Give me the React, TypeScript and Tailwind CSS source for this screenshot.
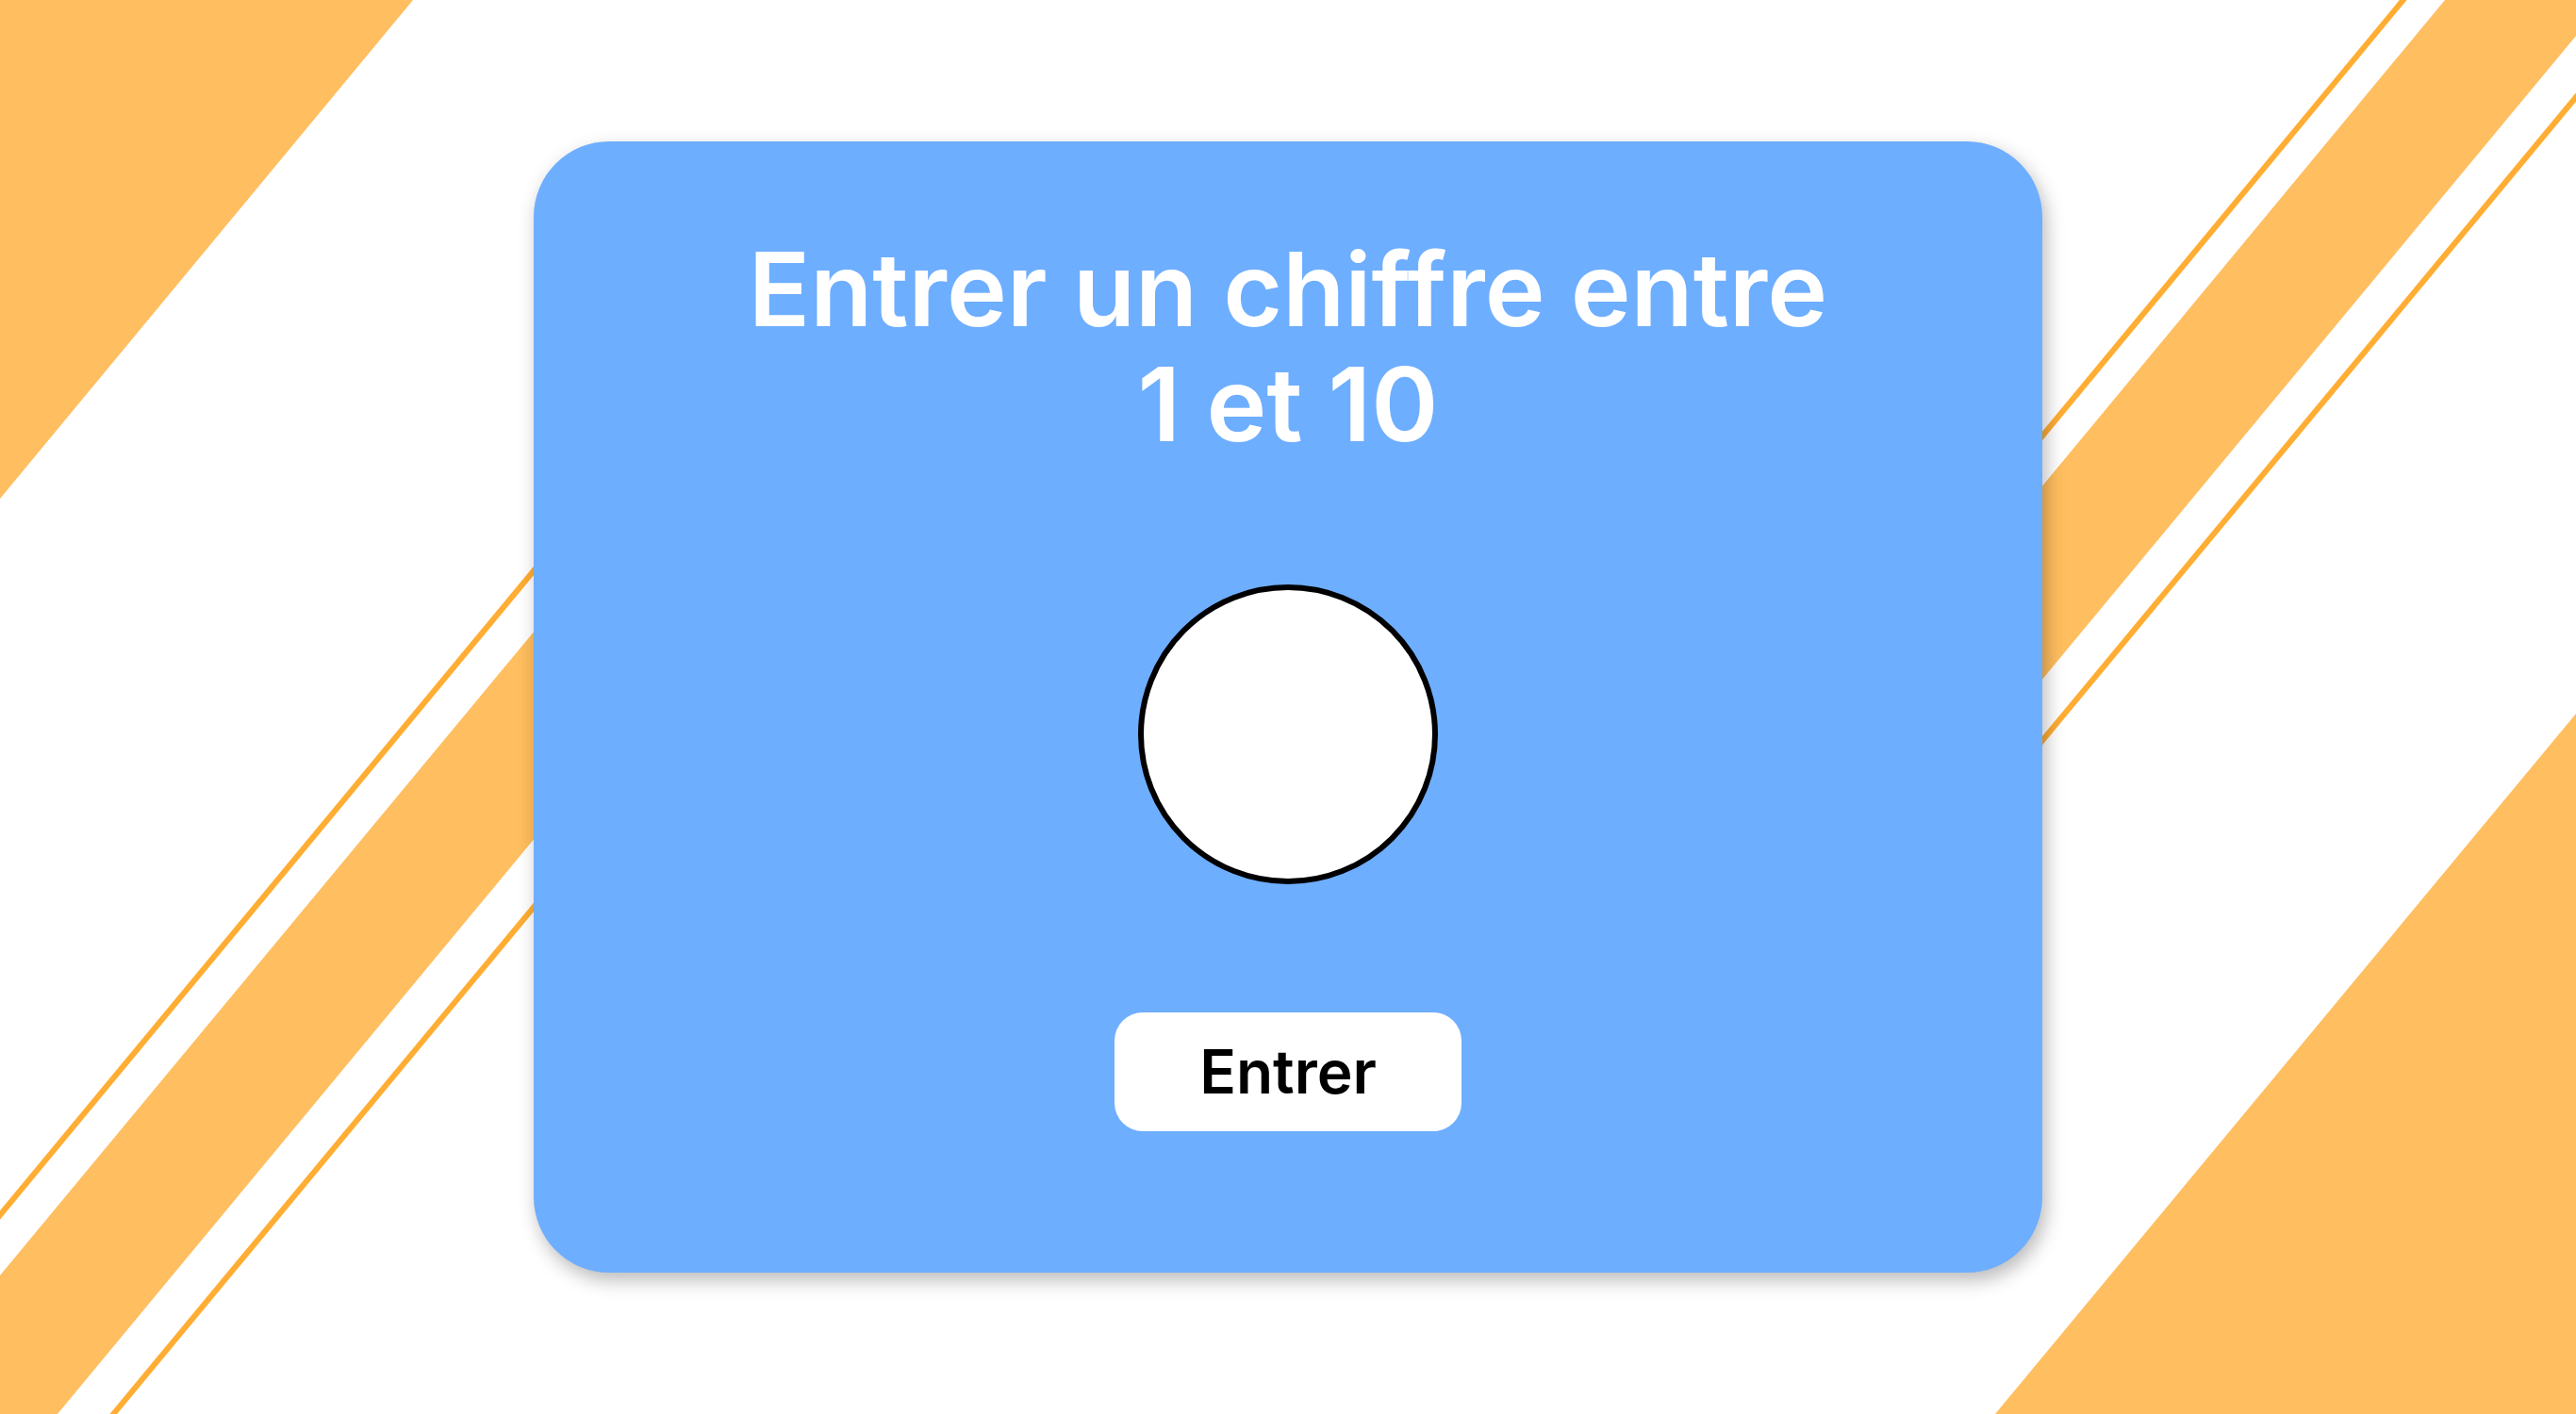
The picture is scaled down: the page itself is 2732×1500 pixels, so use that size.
import { useState } from 'react';

function Background() {
  return (
    <svg
      className="absolute inset-0 -z-10 h-full w-full"
      viewBox="0 0 2732 1500"
      preserveAspectRatio="none"
      aria-hidden="true"
    >
      <g fill="#ffbe5f">
        <path d="M0 0H438L0 529Z" />
        <path d="M0 1353L626 598V818L61 1500H0Z" />
        <path d="M2593 0H2732V38L2106 793V588Z" />
        <path d="M2732 757V1500H2116Z" />
      </g>
      <g stroke="#ffad33" strokeWidth="6">
        <path d="M-10 1301L626 533" />
        <path d="M112 1510L626 890" />
        <path d="M2557 -10L2106 535" />
        <path d="M2742 91L2106 858" />
      </g>
    </svg>
  );
}

export default function App() {
  const [value, setValue] = useState('');

  return (
    <main className="relative isolate flex min-h-screen items-center justify-center overflow-hidden bg-white font-['Inter',sans-serif]">
      <Background />
      <form
        onSubmit={(event) => event.preventDefault()}
        className="flex w-full max-w-[1600px] flex-col items-center rounded-[80px] bg-[#6eaeff] px-[200px] pt-24 pb-[150px] shadow-[4px_8px_20px_rgba(0,0,0,0.28)]"
      >
        <h1 className="text-center text-[108px] leading-[122px] font-semibold text-white">
          <label htmlFor="chiffre">Entrer un chiffre entre 1 et 10</label>
        </h1>
        <input
          id="chiffre"
          type="text"
          inputMode="numeric"
          value={value}
          onChange={(event) => setValue(event.target.value)}
          className="mt-[130px] size-[318px] rounded-full border-6 border-black bg-white text-center text-[108px] font-semibold text-black outline-none"
        />
        <button
          type="submit"
          className="mt-[136px] h-[126px] w-[368px] rounded-[30px] bg-white text-[64px] font-semibold text-black"
        >
          Entrer
        </button>
      </form>
    </main>
  );
}
